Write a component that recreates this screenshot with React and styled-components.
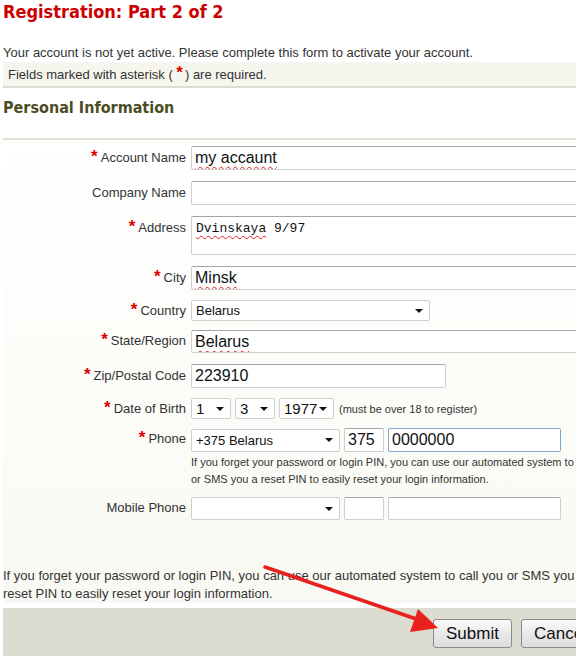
import React from 'react';
import styled, { createGlobalStyle } from 'styled-components';

const GlobalStyle = createGlobalStyle`
  body {
    margin: 0;
    background: #fff;
    font-family: "Liberation Sans", Arial, sans-serif;
    color: #333;
    overflow: hidden;
  }
`;

const Page = styled.div`
  position: relative;
  width: 700px;
  padding-left: 3px;
`;

const Title = styled.h1`
  margin: 0;
  padding-top: 1px;
  height: 40px;
  font-family: "DejaVu Sans Condensed", "DejaVu Sans", sans-serif;
  font-size: 18px;
  font-weight: bold;
  color: #cc0000;
`;

const Intro = styled.p`
  margin: 0;
  font-size: 13px;
  line-height: 18px;
  height: 18px;
  padding-top: 3px;
`;

const Note = styled.div`
  background: #f6f6ee;
  border-bottom: 2px solid #dddcce;
  height: 24px;
  padding-left: 5px;
  font-size: 13px;
  line-height: 26px;
`;

const Star = styled.span`
  color: #dd0000;
  font-weight: bold;
  font-size: 17px;
  position: relative;
  top: ${p => p.$top || 0}px;
  margin-right: ${p => p.$mr ?? 3}px;
  line-height: 0;
`;

const Section = styled.h2`
  margin: 0;
  height: 52px;
  padding-top: 10px;
  box-sizing: border-box;
  font-family: "DejaVu Sans Condensed", "DejaVu Sans", sans-serif;
  font-size: 16px;
  font-weight: bold;
  color: #4d4d25;
  border-bottom: 2px solid #e1e0d2;
`;

const FormArea = styled.div`
  background: linear-gradient(#ffffff, #f9f9f3);
  padding-top: 6px;
`;

const Row = styled.div`
  display: grid;
  grid-template-columns: 183px auto;
  column-gap: 5px;
  margin-top: ${p => p.$top ?? 0}px;
  margin-bottom: ${p => p.$gap ?? 10}px;
`;

const Label = styled.label`
  text-align: right;
  font-size: 13px;
  line-height: 14px;
  padding-top: ${p => p.$pad ?? 5}px;
  white-space: nowrap;
`;

const Fields = styled.div`
  display: flex;
  align-items: center;
  gap: ${p => p.$gap ?? 4}px;
`;

const Box = styled.div`
  box-sizing: border-box;
  width: ${p => p.$w}px;
  height: ${p => p.$h || 24}px;
  background: #fff;
  border: 1px solid #cfcfcf;
  border-top-color: ${p => (p.$focus ? '#5b8fc7' : '#a5a5a5')};
  border-color: ${p => (p.$focus ? '#7ea6d3' : undefined)};
  border-radius: 2px;
  padding: ${p => (p.$mono ? '3px 4px' : '0 3px')};
  font-family: ${p => (p.$mono ? '"Liberation Mono", monospace' : '"Liberation Sans", Arial, sans-serif')};
  font-size: ${p => (p.$mono ? 13 : 16)}px;
  line-height: ${p => (p.$mono ? '17px' : `${(p.$h || 24) - 2}px`)};
  color: #111;
  white-space: nowrap;
  overflow: hidden;
`;

const Wavy = styled.span`
  text-decoration: underline wavy #e02020;
  text-decoration-thickness: 1px;
  text-underline-offset: 3px;
`;

const SelectBox = styled.div`
  box-sizing: border-box;
  width: ${p => p.$w}px;
  height: ${p => p.$h || 21}px;
  background: #fff;
  border: 1px solid #cfcfcf;
  border-radius: 2px;
  display: flex;
  align-items: center;
  justify-content: space-between;
  padding: 0 6px 0 4px;
  font-size: ${p => p.$fs || 13}px;
  color: #111;
`;

const Caret = styled.span`
  width: 0;
  height: 0;
  border-left: 4px solid transparent;
  border-right: 4px solid transparent;
  border-top: 4px solid #111;
`;

const Hint = styled.span`
  font-size: 11px;
  margin-left: 1px;
`;

const Help = styled.div`
  font-size: 11px;
  line-height: 17px;
  margin: 2px 0 0 188px;
  width: 400px;
  white-space: nowrap;
`;

const Bottom = styled.p`
  margin: 0;
  padding-top: 47px;
  font-size: 13px;
  line-height: 18px;
  white-space: nowrap;
`;

const Bar = styled.div`
  background: #dddcd0;
  height: 50px;
  margin-top: 5px;
  display: flex;
  padding-left: 430px;
  padding-top: 11px;
  box-sizing: border-box;
  gap: 9px;
`;

const Button = styled.button`
  height: 29px;
  padding: 0 10px;
  border: 1px solid #8a8a8a;
  border-radius: 3px;
  background: linear-gradient(#fbfbfb, #e9e9e9 50%, #dcdcdc);
  font-family: "Liberation Sans", Arial, sans-serif;
  font-size: 17px;
  color: #111;
  min-width: 79px;
`;

const Arrow = styled.svg`
  position: absolute;
  left: 0;
  top: 0;
  pointer-events: none;
`;

function Select({ w, value, fs, h }) {
  return (
    <SelectBox $w={w} $fs={fs} $h={h}>
      <span>{value}</span>
      <Caret />
    </SelectBox>
  );
}

export default function App() {
  return (
    <>
      <GlobalStyle />
      <Page>
        <Title>Registration: Part 2 of 2</Title>
        <Intro>Your account is not yet active. Please complete this form to activate your account.</Intro>
        <Note>
          Fields marked with asterisk ( <Star $top={-1} $mr={2}>*</Star>) are required.
        </Note>
        <Section>Personal Information</Section>
        <FormArea>
          <Row $gap={11}>
            <Label><Star>*</Star>Account Name</Label>
            <Fields><Box $w={400}><Wavy>my accaunt</Wavy></Box></Fields>
          </Row>
          <Row $gap={11}>
            <Label>Company Name</Label>
            <Fields><Box $w={400} /></Fields>
          </Row>
          <Row $gap={11}>
            <Label><Star>*</Star>Address</Label>
            <Fields><Box $w={400} $h={39} $mono><Wavy>Dvinskaya</Wavy> 9/97</Box></Fields>
          </Row>
          <Row>
            <Label><Star>*</Star>City</Label>
            <Fields><Box $w={400}><Wavy>Minsk</Wavy></Box></Fields>
          </Row>
          <Row $gap={9}>
            <Label $pad={4}><Star>*</Star>Country</Label>
            <Fields><Select w={239} value="Belarus" /></Fields>
          </Row>
          <Row $gap={11}>
            <Label $pad={4}><Star>*</Star>State/Region</Label>
            <Fields><Box $w={400} $h={23}><Wavy>Belarus</Wavy></Box></Fields>
          </Row>
          <Row>
            <Label><Star>*</Star>Zip/Postal Code</Label>
            <Fields><Box $w={255}>223910</Box></Fields>
          </Row>
          <Row $gap={9}>
            <Label $pad={4}><Star>*</Star>Date of Birth</Label>
            <Fields>
              <Select w={40} value="1" fs={15} />
              <Select w={40} value="3" fs={15} />
              <Select w={55} value="1977" fs={15} />
              <Hint>(must be over 18 to register)</Hint>
            </Fields>
          </Row>
          <Row $gap={0}>
            <Label $pad={4}><Star>*</Star>Phone</Label>
            <Fields>
              <Select w={149} h={23} value="+375 Belarus" fs={13} />
              <Box $w={40} $h={24}>375</Box>
              <Box $w={173} $h={24} $focus>0000000</Box>
            </Fields>
          </Row>
          <Help>
            If you forget your password or login PIN, you can use our automated system to call you
            <br />
            or SMS you a reset PIN to easily reset your login information.
          </Help>
          <Row $gap={0} $top={9}>
            <Label $pad={4}>Mobile Phone</Label>
            <Fields>
              <Select w={149} h={23} value="" />
              <Box $w={40} $h={23} />
              <Box $w={173} $h={23} />
            </Fields>
          </Row>
          <Bottom>
            If you forget your password or login PIN, you can use our automated system to call you or SMS you a
            <br />
            reset PIN to easily reset your login information.
          </Bottom>
        </FormArea>
        <Bar>
          <Button>Submit</Button>
          <Button>Cancel</Button>
        </Bar>
        <Arrow width="576" height="656" viewBox="0 0 576 656">
          <line x1="265" y1="567" x2="425" y2="622" stroke="#e8201e" strokeWidth="3.5" strokeLinecap="round" />
          <polygon points="438,628 418,609 410,632" fill="#e8201e" />
        </Arrow>
      </Page>
    </>
  );
}
